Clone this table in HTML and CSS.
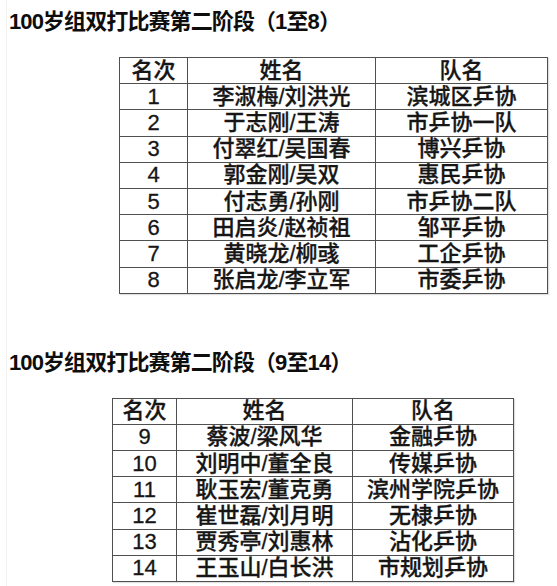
FILE: index.html
```html
<!DOCTYPE html>
<html lang="zh-CN">
<head>
<meta charset="utf-8">
<title>100岁组双打比赛第二阶段</title>
<link rel="stylesheet" href="styles.css">
</head>
<body>
<div class="page">
  <section class="block block-first">
    <h2 class="title">100岁组双打比赛第二阶段（1至8）</h2>
    <table class="rank rank-a">
      <colgroup><col class="c1"><col class="c2"><col class="c3"></colgroup>
      <tr><th>名次</th><th>姓名</th><th>队名</th></tr>
      <tr><td>1</td><td>李淑梅/刘洪光</td><td>滨城区乒协</td></tr>
      <tr><td>2</td><td>于志刚/王涛</td><td>市乒协一队</td></tr>
      <tr><td>3</td><td>付翠红/吴国春</td><td>博兴乒协</td></tr>
      <tr><td>4</td><td>郭金刚/吴双</td><td>惠民乒协</td></tr>
      <tr><td>5</td><td>付志勇/孙刚</td><td>市乒协二队</td></tr>
      <tr><td>6</td><td>田启炎/赵祯祖</td><td>邹平乒协</td></tr>
      <tr><td>7</td><td>黄晓龙/柳彧</td><td>工企乒协</td></tr>
      <tr><td>8</td><td>张启龙/李立军</td><td>市委乒协</td></tr>
    </table>
  </section>
  <section class="block block-second">
    <h2 class="title">100岁组双打比赛第二阶段（9至14）</h2>
    <table class="rank rank-b">
      <colgroup><col class="c1"><col class="c2"><col class="c3"></colgroup>
      <tr><th>名次</th><th>姓名</th><th>队名</th></tr>
      <tr><td>9</td><td>蔡波/梁风华</td><td>金融乒协</td></tr>
      <tr><td>10</td><td>刘明中/董全良</td><td>传媒乒协</td></tr>
      <tr><td>11</td><td>耿玉宏/董克勇</td><td>滨州学院乒协</td></tr>
      <tr><td>12</td><td>崔世磊/刘月明</td><td>无棣乒协</td></tr>
      <tr><td>13</td><td>贾秀亭/刘惠林</td><td>沾化乒协</td></tr>
      <tr><td>14</td><td>王玉山/白长洪</td><td>市规划乒协</td></tr>
    </table>
  </section>
</div>
</body>
</html>
```
FILE: styles.css
```css
html, body {
  margin: 0;
  padding: 0;
  background: #ffffff;
}
body {
  font-family: "Liberation Sans", "Noto Sans CJK SC", sans-serif;
  color: #1a1a1a;
}
.page {
  width: 557px;
  height: 586px;
  box-sizing: border-box;
  border-left: 1px solid #f1f1f1;
  margin-left: 6px;
  overflow: hidden;
}
.block {
  display: flex;
  flex-direction: column;
}
.block-first {
  padding-top: 8px;
}
.block-second {
  padding-top: 55px;
}
.title {
  margin: 0 0 0 2px;
  font-size: 22px;
  line-height: 28px;
  font-weight: bold;
  letter-spacing: -0.9px;
  color: #0d0d0d;
}
.rank {
  border-collapse: collapse;
  font-size: 22px;
  color: #161616;
  box-shadow: 1px 1px 1px rgba(0,0,0,0.12);
}
.rank th, .rank td {
  border: 1px solid #505050;
  padding: 0;
  height: 25.2px;
  line-height: 24px;
  text-align: center;
  font-weight: 500;
  white-space: nowrap;
  -webkit-text-stroke: 0.3px #161616;
}
.rank-a {
  margin: 21px 0 0 112px;
  width: 429px;
}
.rank-a .c1 { width: 68px; }
.rank-a .c2 { width: 188px; }
.rank-a .c3 { width: 172px; }
.rank-b {
  margin: 21px 0 0 105px;
  width: 402px;
}
.rank-b .c1 { width: 64px; }
.rank-b .c2 { width: 176px; }
.rank-b .c3 { width: 161px; }
```
